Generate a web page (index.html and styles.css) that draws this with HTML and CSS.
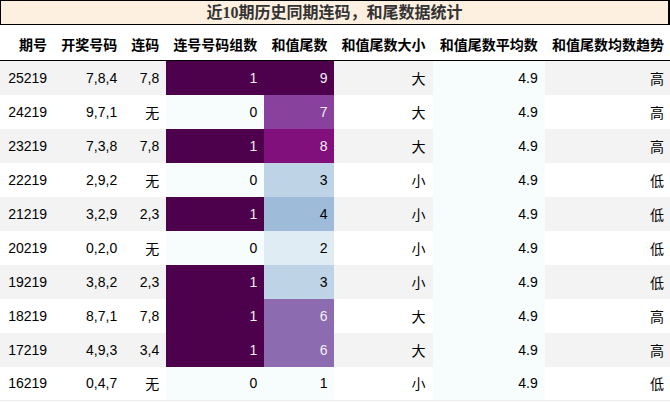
FILE: index.html
```html
<!DOCTYPE html>
<html lang="zh">
<head>
<meta charset="utf-8">
<link rel="stylesheet" href="styles.css">
</head>
<body>
<table class="stats">
  <caption class="title">近10期历史同期连码，和尾数据统计</caption>
  <colgroup>
    <col class="c1"><col class="c2"><col class="c3"><col class="c4"><col class="c5"><col class="c6"><col class="c7"><col class="c8">
  </colgroup>
  <thead>
    <tr><th>期号</th><th>开奖号码</th><th>连码</th><th>连号号码组数</th><th>和值尾数</th><th>和值尾数大小</th><th>和值尾数平均数</th><th>和值尾数均数趋势</th></tr>
  </thead>
  <tbody>
    <tr><td>25219</td><td>7,8,4</td><td>7,8</td><td class="h-dark">1</td><td class="h9">9</td><td>大</td><td class="h-min">4.9</td><td>高</td></tr>
    <tr><td>24219</td><td>9,7,1</td><td>无</td><td class="h-min">0</td><td class="h7">7</td><td>大</td><td class="h-min">4.9</td><td>高</td></tr>
    <tr><td>23219</td><td>7,3,8</td><td>7,8</td><td class="h-dark">1</td><td class="h8">8</td><td>大</td><td class="h-min">4.9</td><td>高</td></tr>
    <tr><td>22219</td><td>2,9,2</td><td>无</td><td class="h-min">0</td><td class="h3">3</td><td>小</td><td class="h-min">4.9</td><td>低</td></tr>
    <tr><td>21219</td><td>3,2,9</td><td>2,3</td><td class="h-dark">1</td><td class="h4">4</td><td>小</td><td class="h-min">4.9</td><td>低</td></tr>
    <tr><td>20219</td><td>0,2,0</td><td>无</td><td class="h-min">0</td><td class="h2">2</td><td>小</td><td class="h-min">4.9</td><td>低</td></tr>
    <tr><td>19219</td><td>3,8,2</td><td>2,3</td><td class="h-dark">1</td><td class="h3">3</td><td>小</td><td class="h-min">4.9</td><td>低</td></tr>
    <tr><td>18219</td><td>8,7,1</td><td>7,8</td><td class="h-dark">1</td><td class="h6">6</td><td>大</td><td class="h-min">4.9</td><td>高</td></tr>
    <tr><td>17219</td><td>4,9,3</td><td>3,4</td><td class="h-dark">1</td><td class="h6">6</td><td>大</td><td class="h-min">4.9</td><td>高</td></tr>
    <tr><td>16219</td><td>0,4,7</td><td>无</td><td class="h-min">0</td><td class="h-min">1</td><td>小</td><td class="h-min">4.9</td><td>低</td></tr>
  </tbody>
</table>
</body>
</html>
```
FILE: styles.css
```css
html, body {
  margin: 0;
  padding: 0;
  background: #fff;
}

.stats {
  width: 670px;
  border-collapse: collapse;
  table-layout: fixed;
  font-family: "Liberation Sans", "Noto Sans CJK SC", sans-serif;
  font-size: 14px;
  color: #000;
}

.c1 { width: 54px; }
.c2 { width: 70px; }
.c3 { width: 42px; }
.c4 { width: 98px; }
.c5 { width: 70px; }
.c6 { width: 98px; }
.c7 { width: 112px; }
.c8 { width: 126px; }

.title {
  caption-side: top;
  box-sizing: border-box;
  width: 670px;
  height: 25px;
  margin-right: 1px;
  border: 1px solid #000;
  border-right-width: 2px;
  background: #fdf0e1;
  color: #333;
  font-family: "Liberation Serif", "Noto Sans CJK SC", serif;
  font-weight: bold;
  font-size: 16px;
  line-height: 23px;
  text-align: center;
}

.stats thead th {
  padding: 11px 7px 8px;
  line-height: 16px;
  font-family: "Noto Sans CJK SC", sans-serif;
  font-weight: bold;
  font-size: 14px;
  text-align: right;
  border-bottom: 1px solid #000;
  white-space: nowrap;
}

.stats tbody td {
  height: 34px;
  padding: 0 7px;
  box-sizing: border-box;
  text-align: right;
  vertical-align: middle;
  white-space: nowrap;
}

.stats tbody tr:nth-child(odd) { background: #f3f3f3; }
.stats tbody tr:last-child td { border-bottom: 1px solid #ececec; }

.h-min { background: #f7fcfd; color: #000; }
.h-dark { background: #4d004b; color: #f1f1f1; }
.h9 { background: #4d004b; color: #f1f1f1; }
.h8 { background: #810f7c; color: #f1f1f1; }
.h7 { background: #88419d; color: #f1f1f1; }
.h6 { background: #8c6bb1; color: #f1f1f1; }
.h4 { background: #9ebcda; color: #000; }
.h3 { background: #bfd3e6; color: #000; }
.h2 { background: #e0ecf4; color: #000; }
```
